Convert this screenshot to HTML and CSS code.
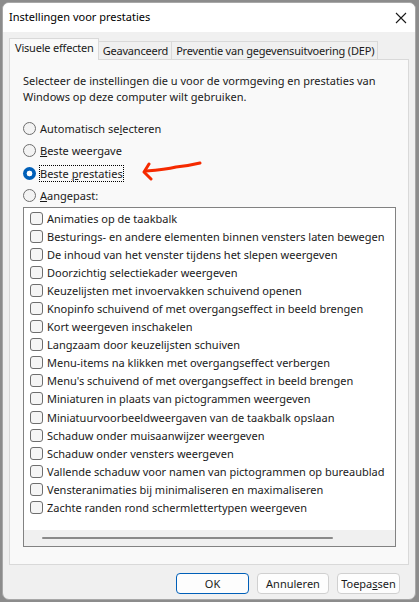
FILE: index.html
```html
<!DOCTYPE html>
<html>
<head>
    <title>Instellingen voor prestaties</title>
    <link rel="stylesheet" href="styles.css">
</head>
<body>
    <div class="window">
        <div class="titlebar">
            <span class="title">Instellingen voor prestaties</span>
            <svg class="close" width="12" height="12" viewBox="0 0 12 12">
                <path d="M1 1 L11 11 M11 1 L1 11" stroke="#1a1a1a" stroke-width="1.1" fill="none"/>
            </svg>
        </div>

        <div class="content">
            <div class="tabs">
                <div class="tab active">Visuele effecten</div>
                <div class="tab">Geavanceerd</div>
                <div class="tab">Preventie van gegevensuitvoering (DEP)</div>
            </div>

            <div class="panel">
                <p class="intro">Selecteer de instellingen die u voor de vormgeving en prestaties van Windows op deze computer wilt gebruiken.</p>

                <div class="options">
                    <div class="option"><span class="radio"></span><span>Automatisch se<u>l</u>ecteren</span></div>
                    <div class="option"><span class="radio"></span><span><u>B</u>este weergave</span></div>
                    <div class="option">
                        <span class="radio checked"></span><span class="focus">Beste <u>p</u>restaties</span>
                        <svg class="arrow" width="62" height="20" viewBox="0 0 62 20">
                            <path d="M4 10 C18 9, 26 8, 34 6 C44 5, 50 4, 58 2" stroke="#f52a00" stroke-width="3" fill="none" stroke-linecap="round"/>
                            <path d="M7 3 L2 11 L9 18" stroke="#f52a00" stroke-width="3" fill="none" stroke-linecap="round" stroke-linejoin="round"/>
                        </svg>
                    </div>
                    <div class="option"><span class="radio"></span><span><u>A</u>angepast:</span></div>
                </div>

                <div class="listbox">
                    <div class="rows">
                        <div class="row"><span class="check"></span>Animaties op de taakbalk</div>
                        <div class="row"><span class="check"></span>Besturings- en andere elementen binnen vensters laten bewegen</div>
                        <div class="row"><span class="check"></span>De inhoud van het venster tijdens het slepen weergeven</div>
                        <div class="row"><span class="check"></span>Doorzichtig selectiekader weergeven</div>
                        <div class="row"><span class="check"></span>Keuzelijsten met invoervakken schuivend openen</div>
                        <div class="row"><span class="check"></span>Knopinfo schuivend of met overgangseffect in beeld brengen</div>
                        <div class="row"><span class="check"></span>Kort weergeven inschakelen</div>
                        <div class="row"><span class="check"></span>Langzaam door keuzelijsten schuiven</div>
                        <div class="row"><span class="check"></span>Menu-items na klikken met overgangseffect verbergen</div>
                        <div class="row"><span class="check"></span>Menu's schuivend of met overgangseffect in beeld brengen</div>
                        <div class="row"><span class="check"></span>Miniaturen in plaats van pictogrammen weergeven</div>
                        <div class="row"><span class="check"></span>Miniatuurvoorbeeldweergaven van de taakbalk opslaan</div>
                        <div class="row"><span class="check"></span>Schaduw onder muisaanwijzer weergeven</div>
                        <div class="row"><span class="check"></span>Schaduw onder vensters weergeven</div>
                        <div class="row"><span class="check"></span>Vallende schaduw voor namen van pictogrammen op bureaublad</div>
                        <div class="row"><span class="check"></span>Vensteranimaties bij minimaliseren en maximaliseren</div>
                        <div class="row"><span class="check"></span>Zachte randen rond schermlettertypen weergeven</div>
                    </div>
                    <div class="hscroll"><div class="thumb"></div></div>
                </div>
            </div>

            <div class="buttons">
                <button class="btn default">OK</button>
                <button class="btn">Annuleren</button>
                <button class="btn">Toepa<u>s</u>sen</button>
            </div>
        </div>
    </div>
</body>
</html>
```

FILE: styles.css
```css
body {
    margin: 0;
    padding: 2px 3px 2px 2px;
    background: #8c8c8c;
    font-family: "Noto Sans", "Open Sans", sans-serif;
    font-size: 11px;
    color: #1a1a1a;
}
.window {
    height: 598px;
    display: flex;
    flex-direction: column;
    background: #f0f0f0;
    border: 1px solid #a8a8a8;
    border-radius: 7px;
    overflow: hidden;
    box-sizing: border-box;
}
.titlebar {
    height: 29px;
    flex: none;
    display: flex;
    align-items: center;
    justify-content: space-between;
    padding: 0 8px 0 6px;
    background: #ffffff;
}
.title {
    font-size: 11px;
    color: #000;
    margin-top: -2px;
}
.content {
    flex: 1;
    display: flex;
    flex-direction: column;
    padding: 6px 6px 0 6px;
}
.tabs {
    display: flex;
    align-items: flex-end;
    height: 21px;
    white-space: nowrap;
    letter-spacing: -0.2px;
}
.tab {
    height: 17px;
    line-height: 17px;
    padding: 0 3px 0 4px;
    border: 1px solid #d9d9d9;
    border-bottom: none;
    border-left: none;
    background: #f0f0f0;
}
.tab.active {
    height: 21px;
    line-height: 18px;
    border-left: 1px solid #d9d9d9;
    background: #f9f9f9;
    position: relative;
    top: 1px;
    padding: 0 4px 0 5px;
}
.panel {
    height: 504px;
    display: flex;
    flex-direction: column;
    background: #f9f9f9;
    border: 1px solid #d9d9d9;
    padding: 0 12px 0 13px;
}
.intro {
    margin: 13px 0 0 0;
    line-height: 16px;
    width: 372px;
}
.options {
    margin-top: 12px;
}
.option {
    display: flex;
    align-items: center;
    height: 22.5px;
}
.radio {
    width: 11px;
    height: 11px;
    border: 1px solid #6e6e6e;
    border-radius: 50%;
    background: #f3f3f3;
    margin-right: 4px;
    flex: none;
}
.radio.checked {
    border: none;
    width: 13px;
    height: 13px;
    background: radial-gradient(circle, #ffffff 0 2.6px, #005fb8 3.2px);
}
.focus {
    outline: 1px dotted #000;
    outline-offset: 0;
    line-height: 15px;
}
.arrow {
    margin: 0 0 4px 19px;
}
.listbox {
    margin-top: 0;
    height: 340px;
    display: flex;
    flex-direction: column;
    justify-content: space-between;
    background: #ffffff;
    border: 1px solid #828282;
    box-sizing: border-box;
    width: 373px;
}
.rows {
    padding-top: 1px;
}
.row {
    display: flex;
    align-items: center;
    height: 18.1px;
    white-space: nowrap;
    padding-left: 6px;
}
.check {
    width: 11px;
    height: 11px;
    border: 1px solid #6e6e6e;
    border-radius: 3px;
    background: #f5f5f5;
    margin-right: 4px;
    flex: none;
}
.hscroll {
    height: 16px;
    background: #f0f0f0;
    display: flex;
    align-items: center;
    padding-left: 18px;
}
.thumb {
    width: 291px;
    height: 2px;
    background: #8a8a8a;
    border-radius: 1px;
}
.buttons {
    display: flex;
    justify-content: flex-end;
    gap: 8px;
    padding: 8px 9px 0 0;
}
.btn {
    font-family: inherit;
    font-size: 11px;
    color: #1a1a1a;
    height: 21px;
    background: #fdfdfd;
    border: 1px solid #d0d0d0;
    border-radius: 4px;
    padding: 0;
    width: 72px;
}
.btn.default {
    border: 1px solid #005fb8;
    width: 73px;
}
.btn:last-child {
    width: 63px;
}
```
